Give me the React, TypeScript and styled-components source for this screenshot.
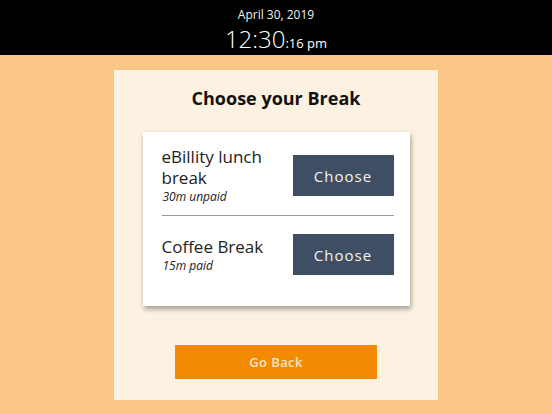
import styled, { createGlobalStyle } from "styled-components"

const GlobalStyle = createGlobalStyle`
	html, body {
		margin: 0;
		padding: 0;
		background: #f9c685;
		font-family: "Open Sans", "Noto Sans", sans-serif;
	}
	* {
		box-sizing: border-box;
	}
`

type breakType = { id: number, name: string, note: string }

const breaks: breakType[] = [
	{ id: 1, name: "eBillity lunch break", note: "30m unpaid" },
	{ id: 2, name: "Coffee Break", note: "15m paid" },
]

const App = () => {
	return (
		<>
			<GlobalStyle />
			<Page>
				<Header>
					<DateLine>April 30, 2019</DateLine>
					<TimeLine>
						<span className="big">12:30</span>
						<span className="small">:16 pm</span>
					</TimeLine>
				</Header>
				<Panel>
					<Title>Choose your Break</Title>
					<Card>
						{breaks.map((br, i) => (
							<Row key={br.id} $first={i === 0}>
								<Info>
									<div className="name">{br.name}</div>
									<div className="note">{br.note}</div>
								</Info>
								<ChooseButton>Choose</ChooseButton>
							</Row>
						))}
					</Card>
					<BackButton>Go Back</BackButton>
				</Panel>
			</Page>
		</>
	)
}

const Page = styled.div`
	width: 552px;
	height: 414px;
	display: flex;
	flex-direction: column;
	align-items: center;
	background: #f9c685;
`

const Header = styled.header`
	width: 100%;
	height: 55px;
	background: #000;
	color: #fff;
	display: flex;
	flex-direction: column;
	align-items: center;
	padding-top: 7px;
`

const DateLine = styled.div`
	font-size: 12px;
	line-height: 16px;
	color: #f2f2f2;
`

const TimeLine = styled.div`
	display: flex;
	align-items: baseline;
	height: 30px;
	line-height: 30px;
	margin-top: 1px;
	color: #fff;

	.big {
		font-size: 24px;
		font-weight: 300;
	}

	.small {
		font-size: 13px;
	}
`

const Panel = styled.main`
	margin-top: 15px;
	width: 324px;
	height: 330px;
	background: #fdf1e2;
	display: flex;
	flex-direction: column;
	align-items: center;
	padding-top: 16px;
`

const Title = styled.h1`
	margin: 0;
	font-size: 18px;
	line-height: 24px;
	font-weight: 700;
	color: #111;
`

const Card = styled.section`
	margin-top: 22px;
	width: 267px;
	height: 174px;
	background: #fff;
	box-shadow: 1px 3px 5px rgba(0, 0, 0, 0.35);
	padding: 14px 16px 32px 19px;
	display: flex;
	flex-direction: column;
`

const Row = styled.div<{ $first: boolean }>`
	display: flex;
	align-items: center;
	justify-content: space-between;
	padding: ${p => p.$first ? "0 0 10px" : "18px 0 0"};
	border-bottom: ${p => p.$first ? "1px solid #9a9a9a" : "0 none"};
`

const Info = styled.div`
	width: 120px;
	color: #222;

	.name {
		font-size: 17px;
		line-height: 21px;
	}

	.note {
		font-size: 12px;
		line-height: 17px;
		font-style: italic;
		padding-left: 1px;
	}
`

const ChooseButton = styled.button`
	width: 101px;
	height: 41px;
	border: 0 none;
	outline: 0 none;
	background: #3f4e63;
	color: #f4f4f4;
	font-family: inherit;
	font-size: 15px;
	letter-spacing: 1px;
	cursor: pointer;
`

const BackButton = styled.button`
	margin-top: 39px;
	width: 202px;
	height: 34px;
	border: 0 none;
	outline: 0 none;
	background: #f28a02;
	color: #fce6c6;
	font-family: inherit;
	font-size: 13px;
	font-weight: 600;
	letter-spacing: 0.4px;
	cursor: pointer;
`

export default App
